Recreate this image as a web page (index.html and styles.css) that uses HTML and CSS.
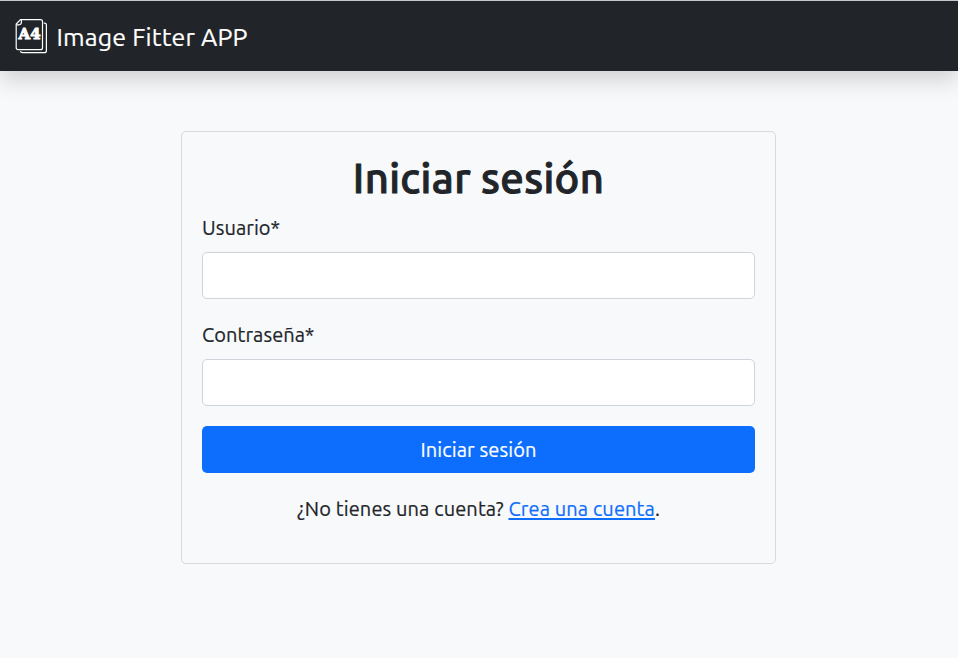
FILE: index.html
```html
<!DOCTYPE html>
<html lang="es">
<head>
<meta charset="utf-8">
<title>Image Fitter APP</title>
<link rel="stylesheet" href="styles.css">
</head>
<body>
<header class="navbar">
  <a class="brand" href="#">
    <svg class="logo" width="34" height="38" viewBox="0 0 34 38" fill="none" stroke="#fff" stroke-width="1.2">
      <path d="M6.5 1.6H26.5Q28.5 1.6 28.5 3.6V29.7Q28.5 31.7 26.5 31.7H4.2Q2.2 31.7 2.2 29.7V6Z"/>
      <path d="M7.4 2V4.3Q7.4 6.8 4.9 6.8H2.4"/>
      <path d="M29.8 5.2H30.5Q32.4 5.2 32.4 7.2V32.7Q32.4 34.7 30.4 34.7H8.5Q6.6 34.7 6.5 33.1"/>
      <text class="logo-text" x="15.6" y="21.4" text-anchor="middle" textLength="22" lengthAdjust="spacingAndGlyphs">A4</text>
    </svg>
    <span class="brand-name">Image Fitter APP</span>
  </a>
</header>
<main class="card">
  <h1 class="title">Iniciar sesión</h1>
  <form class="form">
    <label class="label" for="user">Usuario*</label>
    <input class="input" id="user" type="text">
    <label class="label label-password" for="password">Contraseña*</label>
    <input class="input" id="password" type="password">
    <button class="button" type="button">Iniciar sesión</button>
  </form>
  <p class="signup">¿No tienes una cuenta? <a class="link" href="#">Crea una cuenta</a>.</p>
</main>
</body>
</html>
```
FILE: styles.css
```css
* { box-sizing: border-box; }
body {
  margin: 0;
  min-height: 658px;
  background: #f8f9fb;
  color: #212529;
  font: 20px/30px "Ubuntu", "Noto Sans", sans-serif;
  -webkit-text-stroke: .2px;
}
.navbar {
  display: flex;
  align-items: center;
  height: 71px;
  padding: 2px 14px 0;
  border-top: 1px solid #c3c8c8;
  background: #212529;
  box-shadow: 0 10px 20px rgba(0, 0, 0, .15);
}
.brand { display: flex; align-items: center; gap: 8.5px; color: #fff; text-decoration: none; }
.logo { display: block; }
.logo-text { font: bold 14.5px "DejaVu Serif", serif; fill: #fff; stroke: #fff; stroke-width: .9; }
.brand-name { font-size: 25px; letter-spacing: .15px; white-space: nowrap; }
.card {
  width: 595px;
  height: 433px;
  margin: 60px 0 0 181px;
  padding: 20px;
  border: 1px solid #d7d9dc;
  border-radius: 5px;
}
.title {
  margin: 0 0 10px;
  font-size: 41.87px;
  font-weight: 500;
  line-height: 51px;
  text-align: center;
  letter-spacing: .35px;
  -webkit-text-stroke: 1px #212529;
}
.form { display: flex; flex-direction: column; }
.label { align-self: flex-start; margin-bottom: 9px; letter-spacing: .06px; }
.label-password { margin-top: 21px; }
.input {
  width: 100%;
  height: 47px;
  padding: 0 15px;
  border: 1px solid #ced4da;
  border-radius: 5px;
  background: #fff;
  font: inherit;
}
.button {
  height: 47px;
  margin-top: 20px;
  padding: 0;
  border: 0;
  border-radius: 5px;
  background: #0d6efd;
  color: #fff;
  font: inherit;
  letter-spacing: .12px;
}
.signup { margin: 21px 0 0; text-align: center; letter-spacing: .12px; white-space: nowrap; }
.link {
  color: #0d6efd;
  text-decoration: underline;
  text-decoration-thickness: 2px;
  text-underline-offset: 2px;
  text-decoration-skip-ink: none;
}
```
